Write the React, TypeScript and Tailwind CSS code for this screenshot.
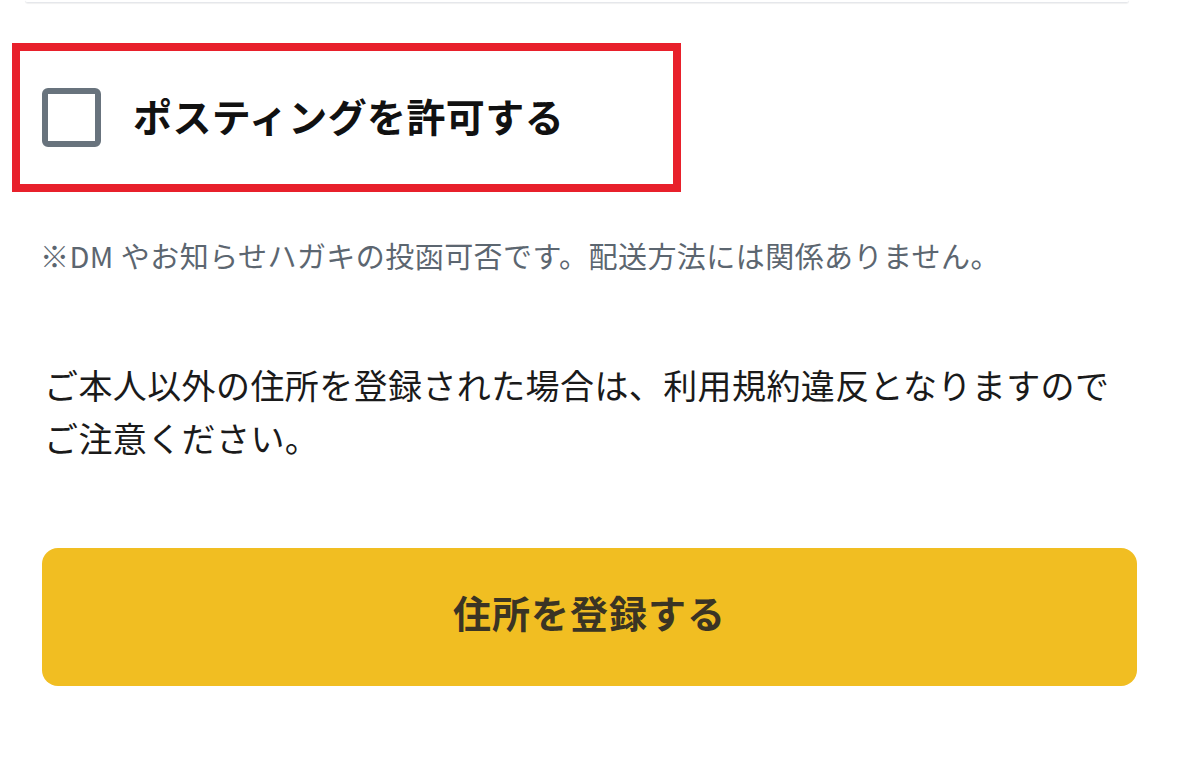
import { useState } from "react";

const FONT = "font-['Noto_Sans_CJK_JP','Noto_Sans',sans-serif]";

export default function App() {
  const [allowPosting, setAllowPosting] = useState(false);

  return (
    <div className={`${FONT} w-[1179px] h-[771px] bg-white overflow-hidden`}>
      {/* bottom edge of the field above */}
      <div className="ml-[25px] w-[1104px] h-[3px] rounded-b-md border-b border-gray-200 shadow-[0_1px_1px_rgba(0,0,0,0.06)]" />

      <div className="mt-[40px] ml-[12px] w-[669px] h-[149px] border-8 border-[#e8202b] flex items-center pl-[22px]">
        <button
          type="button"
          role="checkbox"
          aria-checked={allowPosting}
          onClick={() => setAllowPosting(!allowPosting)}
          className="flex items-center gap-[32px] cursor-pointer"
        >
          <span className="w-[59px] h-[59px] shrink-0 rounded-[6px] border-[6px] border-[#68737d] bg-white" />
          <span className="text-[39px] font-bold text-[#111] leading-none tracking-[0.4px] -mt-[4px]">
            ポスティングを許可する
          </span>
        </button>
      </div>

      <p className="mt-[43px] ml-[40px] text-[29px] leading-[40px] text-[#5c6670] tracking-[0.45px]">
        ※DM やお知らせハガキの投函可否です。配送方法には関係ありません。
      </p>

      <p className="mt-[83px] ml-[44px] mr-[30px] text-[34px] leading-[53px] text-[#1a1a1a] tracking-[0.4px] whitespace-nowrap">
        ご本人以外の住所を登録された場合は、利用規約違反となりますので
        <br />
        ご注意ください。
      </p>

      <div className="mt-[84px] mx-[42px]">
        <button
          type="button"
          className="w-full h-[138px] rounded-[16px] bg-[#f1be22] flex items-center justify-center pb-[12px] text-[38px] font-bold text-[#3a3424] tracking-[1px]"
        >
          住所を登録する
        </button>
      </div>
    </div>
  );
}
